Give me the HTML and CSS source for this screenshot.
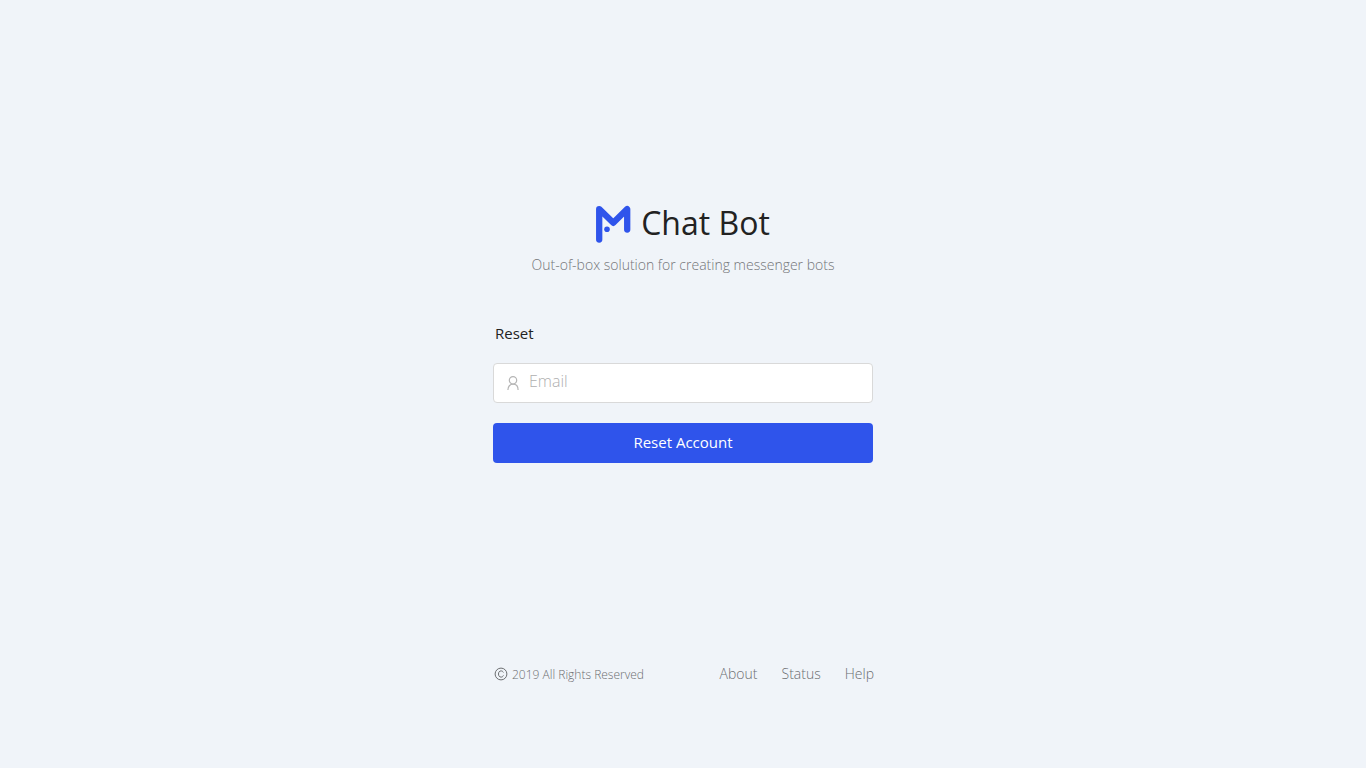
FILE: index.html
```html
<!DOCTYPE html>
<html lang="en">
<head>
<meta charset="utf-8">
<meta name="viewport" content="width=device-width, initial-scale=1">
<title>Chat Bot - Reset</title>
<link rel="stylesheet" href="styles.css">
</head>
<body>
<div class="page">
  <main class="panel">
    <header class="brand">
      <h1 class="brand-title">
        <svg class="logo" viewBox="0 0 35 38" aria-hidden="true">
          <path d="M3.2 34.6V4.1L17.3 17.8L31.2 4.1V24.6" fill="none" stroke="#2f54eb" stroke-width="6.3" stroke-linecap="round" stroke-linejoin="round"/>
          <circle cx="11" cy="24.2" r="2.8" fill="#2f54eb"/>
        </svg>
        <span>Chat Bot</span>
      </h1>
      <p class="tagline">Out-of-box solution for creating messenger bots</p>
    </header>
    <form class="form">
      <h2 class="form-title">Reset</h2>
      <label class="field">
        <svg class="field-icon" viewBox="0 0 14 14" aria-hidden="true">
          <circle cx="7" cy="4.3" r="3.7"/>
          <path d="M1.9 14C1.9 10.4 4 8.2 7 8.2S12.1 10.4 12.1 14"/>
        </svg>
        <input class="input" type="email" placeholder="Email" aria-label="Email">
      </label>
      <button class="button" type="submit">Reset Account</button>
    </form>
  </main>
  <footer class="footer">
    <p class="copyright">
      <svg class="copy-icon" viewBox="0 0 14 14" aria-hidden="true">
        <circle cx="7" cy="7" r="5.9"/>
        <path d="M9.4 5.5C9 4.5 8.1 3.9 7.1 3.9C5.5 3.9 4.5 5.1 4.5 7S5.5 10.1 7.1 10.1C8.1 10.1 9.1 9.5 9.4 8.4"/>
      </svg>
      2019 All Rights Reserved
    </p>
    <nav class="links">
      <a href="#about">About</a>
      <a href="#status">Status</a>
      <a href="#help">Help</a>
    </nav>
  </footer>
</div>
</body>
</html>
```
FILE: styles.css
```css
* {
  box-sizing: border-box;
}

body {
  margin: 0;
  background: #f0f4f9;
  color: #222;
  font-family: "Open Sans", "Noto Sans", sans-serif;
  font-size: 14px;
}

h1, h2, p {
  margin: 0;
  font-weight: 400;
}

.page {
  display: flex;
  flex-direction: column;
  align-items: center;
  min-height: 100vh;
  padding: 200px 16px 82px;
}

.panel {
  width: 100%;
  max-width: 380px;
}

.brand {
  text-align: center;
}

.brand-title {
  display: flex;
  align-items: center;
  justify-content: center;
  gap: 10px;
  font-size: 32px;
  line-height: 46px;
}

.logo {
  width: 35px;
  height: 38px;
  margin-top: 2px;
}

.tagline {
  padding-top: 9px;
  color: #737578;
  font-size: 14px;
  font-weight: 300;
  line-height: 20px;
}

.form {
  display: flex;
  flex-direction: column;
  margin-top: 44px;
}

.form-title {
  padding: 0 2px;
  font-size: 15px;
  line-height: 28px;
}

.field {
  display: flex;
  align-items: center;
  gap: 9px;
  height: 40px;
  margin: 16px 0 20px;
  padding: 0 12px;
  border: 1px solid #d9d9d9;
  border-radius: 4px;
  background: #fff;
}

.field-icon {
  width: 14px;
  height: 14px;
  fill: none;
  stroke: #b5b5b5;
  stroke-width: 1.2;
}

.input {
  flex: 1;
  min-width: 0;
  padding: 0 0 4px;
  border: 0;
  outline: 0;
  background: transparent;
  color: #222;
  font: inherit;
  font-size: 16px;
  font-weight: 300;
}

.input::placeholder {
  color: #afafaf;
}

.button {
  height: 40px;
  padding: 0 15px 2px;
  border: 0;
  border-radius: 4px;
  background: #2f54eb;
  color: #fff;
  font: inherit;
  font-size: 15px;
  cursor: pointer;
}

.footer {
  display: flex;
  align-items: center;
  justify-content: space-between;
  width: 100%;
  max-width: 382px;
  margin-top: auto;
  padding-left: 2px;
  color: #6c6e71;
  font-weight: 300;
}

.copyright {
  display: flex;
  align-items: center;
  gap: 4px;
  font-size: 12px;
  font-weight: 300;
}

.copy-icon {
  width: 14px;
  height: 14px;
  fill: none;
  stroke: currentColor;
  stroke-width: 1;
}

.links {
  display: flex;
  gap: 24px;
  font-size: 14px;
  line-height: 24px;
}

.links a {
  color: inherit;
  text-decoration: none;
}
```
